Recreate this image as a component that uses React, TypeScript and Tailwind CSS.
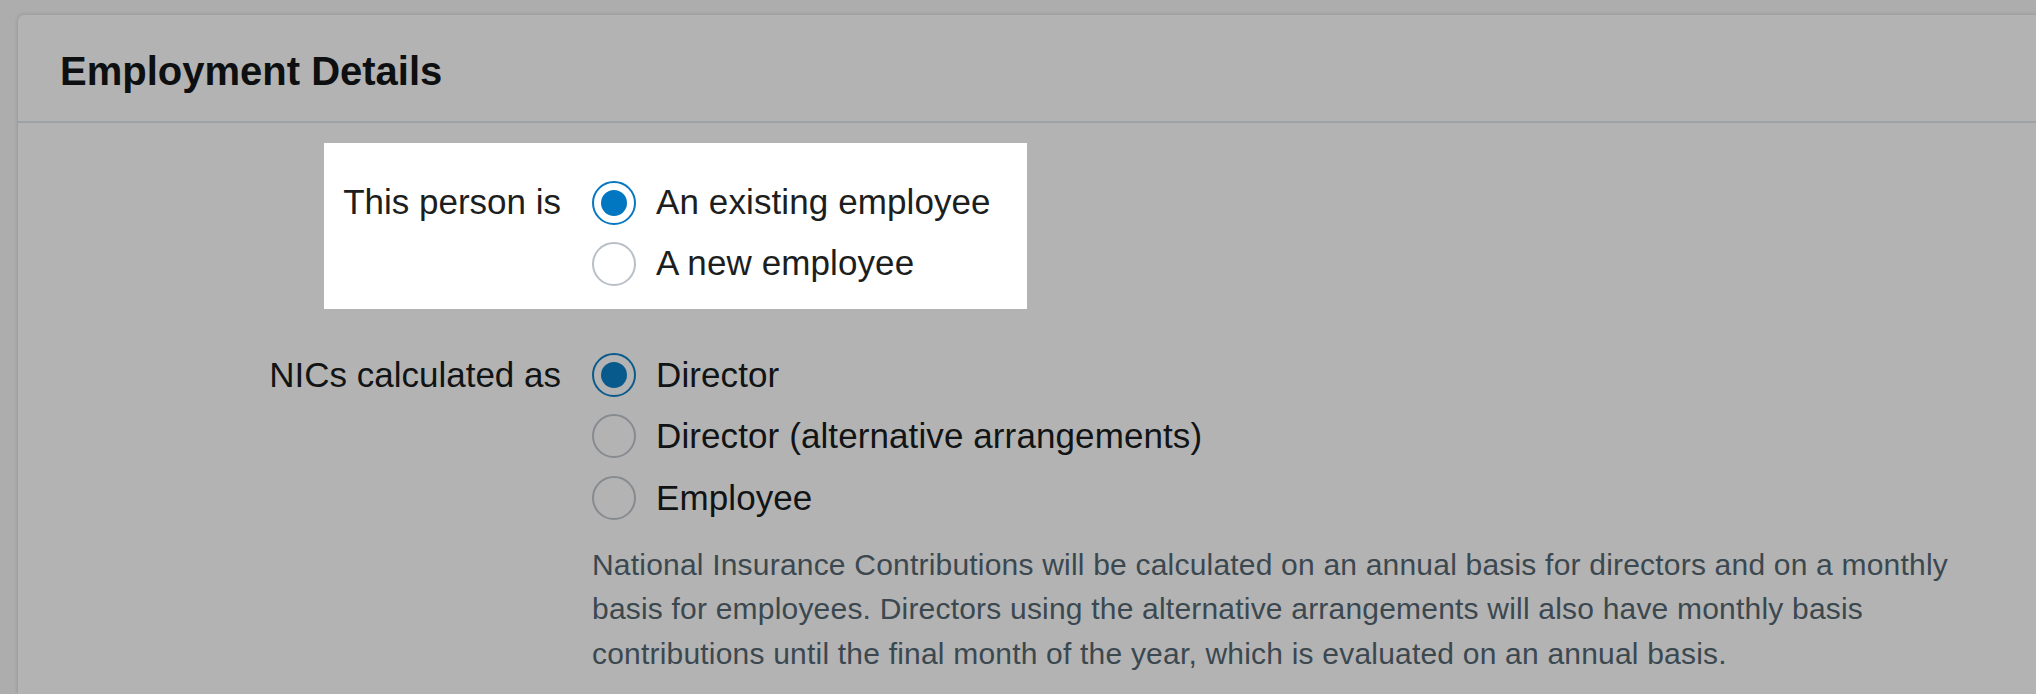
import React from "react";

type Option = { label: string; checked?: boolean };

const Radio: React.FC<{ checked?: boolean; dimmed?: boolean }> = ({ checked, dimmed }) => {
    const ring = checked
        ? dimmed ? "border-[#0b5a8c]" : "border-[#0677c0]"
        : dimmed ? "border-[#878b8f]" : "border-[#b8bfc6]";
    const dot = dimmed ? "bg-[#085a8c]" : "bg-[#0077c0]";
    return (
        <span className={`shrink-0 w-[44px] h-[44px] rounded-full border-2 ${ring} flex items-center justify-center`}>
            {checked && <span className={`w-[26px] h-[26px] rounded-full ${dot}`} />}
        </span>
    );
};

const OptionList: React.FC<{ options: Option[]; dimmed?: boolean; rowH: string }> = ({ options, dimmed, rowH }) => (
    <div className="flex flex-col">
        {options.map((o) => (
            <label key={o.label} className={`${rowH} flex items-center gap-[20px]`}>
                <Radio checked={o.checked} dimmed={dimmed} />
                <span className={`text-[35px] tracking-[0.1px] whitespace-nowrap ${dimmed ? "text-[#111314]" : "text-[#1c1e20]"}`}>{o.label}</span>
            </label>
        ))}
    </div>
);

export default function App() {
    const personOptions: Option[] = [
        { label: "An existing employee", checked: true },
        { label: "A new employee" },
    ];
    const nicOptions: Option[] = [
        { label: "Director", checked: true },
        { label: "Director (alternative arrangements)" },
        { label: "Employee" },
    ];

    return (
        <div className="w-[2036px] h-[694px] overflow-hidden bg-[#adadad] pt-[15px] pl-[18px]" style={{ fontFamily: '"Liberation Sans", Arial, Helvetica, sans-serif' }}>
            <div className="h-full bg-[#b3b3b3] rounded-tl-[6px] shadow-[0_0_4px_rgba(0,0,0,0.18)]">
                {/* Header */}
                <div className="h-[108px] flex items-center pl-[42px] pt-[6px] border-b-2 border-[#9ea2a5]">
                    <h2 className="text-[40px] font-bold text-[#0d0f10]">Employment Details</h2>
                </div>

                {/* Body */}
                <div className="pt-[20px] pl-[212px]">
                    {/* Highlighted row */}
                    <div className="ml-[94px] w-fit bg-white flex gap-[31px] pl-[20px] pr-[36px] pt-[29px] pb-[15px]">
                        <div className="w-[217px] h-[61px] flex items-center justify-end text-[35px] text-[#1c1e20] whitespace-nowrap">This person is</div>
                        <OptionList options={personOptions} rowH="h-[61px]" />
                    </div>

                    {/* NICs row */}
                    <div className="mt-[35px] flex gap-[31px]">
                        <div className="w-[331px] h-[61.5px] flex items-center justify-end text-[35px] text-[#111314] whitespace-nowrap">NICs calculated as</div>
                        <div className="flex flex-col">
                            <OptionList options={nicOptions} dimmed rowH="h-[61.5px]" />
                            <p className="mt-[14px] w-[1400px] text-[30px] tracking-[0.2px] leading-[44.5px] text-[#3b4850]">
                                National Insurance Contributions will be calculated on an annual basis for directors and on a monthly basis for employees. Directors using the alternative arrangements will also have monthly basis contributions until the final month of the year, which is evaluated on an annual basis.
                            </p>
                        </div>
                    </div>
                </div>
            </div>
        </div>
    );
}
